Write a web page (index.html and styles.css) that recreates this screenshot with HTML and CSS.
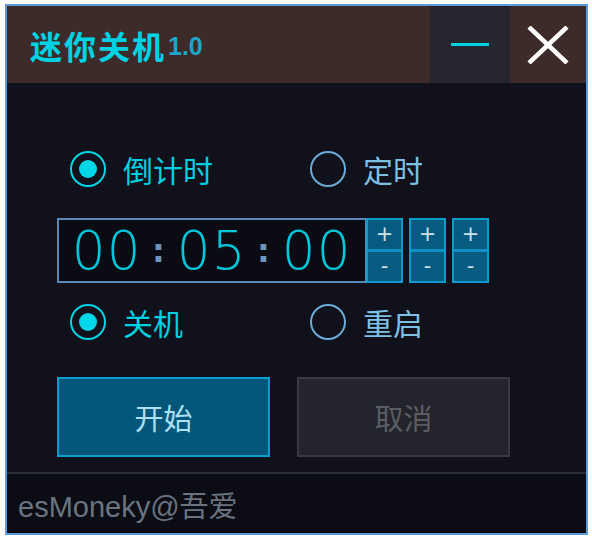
FILE: index.html
```html
<!DOCTYPE html>
<html lang="zh-CN">
<head>
    <meta charset="UTF-8">
    <title>迷你关机</title>
    <link rel="stylesheet" href="styles.css">
</head>
<body>
    <div class="window">
        <header class="titlebar">
            <h1 class="title">迷你关机<span class="ver">1.0</span></h1>
            <button type="button" class="tb-btn min"><span class="dash"></span></button>
            <button type="button" class="tb-btn close">
                <svg width="42" height="38" viewBox="0 0 42 38">
                    <path d="M2 1 L40 37 M40 1 L2 37" stroke="#ffffff" stroke-width="4.5" fill="none"/>
                </svg>
            </button>
        </header>

        <main class="content">
            <div class="radio-row">
                <label class="radio checked"><span class="circle"></span>倒计时</label>
                <label class="radio"><span class="circle"></span>定时</label>
            </div>

            <div class="timer">
                <div class="lcd">
                    <span class="digit">0</span><span class="digit">0</span><span class="digit sep">:</span><span class="digit">0</span><span class="digit">5</span><span class="digit sep">:</span><span class="digit">0</span><span class="digit">0</span>
                </div>
                <div class="stepper"><button type="button">+</button><button type="button">-</button></div>
                <div class="stepper"><button type="button">+</button><button type="button">-</button></div>
                <div class="stepper"><button type="button">+</button><button type="button">-</button></div>
            </div>

            <div class="radio-row">
                <label class="radio checked"><span class="circle"></span>关机</label>
                <label class="radio"><span class="circle"></span>重启</label>
            </div>

            <div class="actions">
                <button type="button" class="btn primary">开始</button>
                <button type="button" class="btn disabled">取消</button>
            </div>
        </main>

        <footer class="footer">esMoneky@吾爱</footer>
    </div>
</body>
</html>
```

FILE: styles.css
```css
body {
    margin: 0;
    background: #ffffff;
    font-family: 'Liberation Sans', 'Noto Sans CJK SC', sans-serif;
}

.window {
    width: 579px;
    height: 527px;
    margin: 4px 0 0 5px;
    border: 2px solid #5b9bd8;
    background: #10111a;
    display: flex;
    flex-direction: column;
}

/* title bar */
.titlebar {
    height: 77px;
    background: #3d2b29;
    display: flex;
    align-items: stretch;
}

.title {
    flex: 1;
    margin: 0;
    padding-left: 23px;
    display: flex;
    align-items: center;
    font-size: 32px;
    font-weight: bold;
    color: #00d2e4;
    letter-spacing: 2px;
}

.ver {
    font-size: 25px;
    color: #1ea4c8;
    margin-left: 2px;
    margin-top: 4px;
    letter-spacing: 0;
}

.tb-btn {
    border: none;
    padding: 0;
    display: flex;
    align-items: center;
    justify-content: center;
    cursor: pointer;
}

.tb-btn.min {
    width: 80px;
    background: #252630;
}

.dash {
    width: 38px;
    height: 3px;
    background: #00d4e0;
}

.tb-btn.close {
    width: 76px;
    background: #3d2b29;
}

/* main area */
.content {
    flex: 1;
    padding: 67px 0 0 50px;
    border-bottom: 2px solid #2a2c33;
}

.radio-row {
    display: flex;
    height: 38px;
    padding-left: 13px;
}

.radio {
    width: 240px;
    display: flex;
    align-items: center;
    gap: 17px;
    font-size: 30px;
    color: #7ec0e4;
}

.radio .circle {
    width: 32px;
    height: 32px;
    border: 2px solid #6aaad8;
    border-radius: 50%;
    display: flex;
    align-items: center;
    justify-content: center;
}

.radio.checked {
    color: #00d0e2;
}

.radio.checked .circle {
    border-color: #00d4e6;
}

.radio.checked .circle::after {
    content: "";
    width: 18px;
    height: 18px;
    border-radius: 50%;
    background: #00d8ea;
}

.timer {
    display: flex;
    margin: 30px 0 20px;
}

.lcd {
    width: 294px;
    height: 61px;
    padding-left: 12px;
    border: 2px solid #5a88b8;
    background: #0b0c13;
    display: flex;
    align-items: center;
    font-family: 'DejaVu Sans', sans-serif;
    font-weight: 200;
    font-size: 53px;
    color: #00c8dc;
}

.digit {
    width: 35px;
    text-align: center;
    line-height: 1;
}

.digit.sep {
    color: #6c94bc;
    font-size: 32px;
    font-weight: bold;
}

.stepper {
    width: 33px;
    height: 61px;
    margin-left: 6px;
    border: 2px solid #0b9ccc;
    background: #075a80;
    display: flex;
    flex-direction: column;
}

.lcd + .stepper {
    margin-left: -1px;
}

.stepper button {
    flex: 1;
    border: none;
    padding: 0;
    background: none;
    color: #cfe0ea;
    font-family: 'DejaVu Sans', sans-serif;
    font-size: 21px;
    line-height: 1;
    cursor: pointer;
}

.stepper button + button {
    border-top: 3px solid #0d8fc4;
}

.actions {
    display: flex;
    gap: 27px;
    margin-top: 36px;
}

.btn {
    width: 213px;
    height: 80px;
    font-family: 'Liberation Sans', 'Noto Sans CJK SC', sans-serif;
    font-size: 29px;
    cursor: pointer;
}

.btn.primary {
    border: 2px solid #0a9dcd;
    background: #04577a;
    color: #aee0f2;
}

.btn.disabled {
    border: 2px solid #393a41;
    background: #24252c;
    color: #5b5d63;
}

.footer {
    height: 59px;
    padding-left: 11px;
    display: flex;
    align-items: center;
    background: #0b0c14;
    font-size: 29px;
    color: #6a7480;
}
```
